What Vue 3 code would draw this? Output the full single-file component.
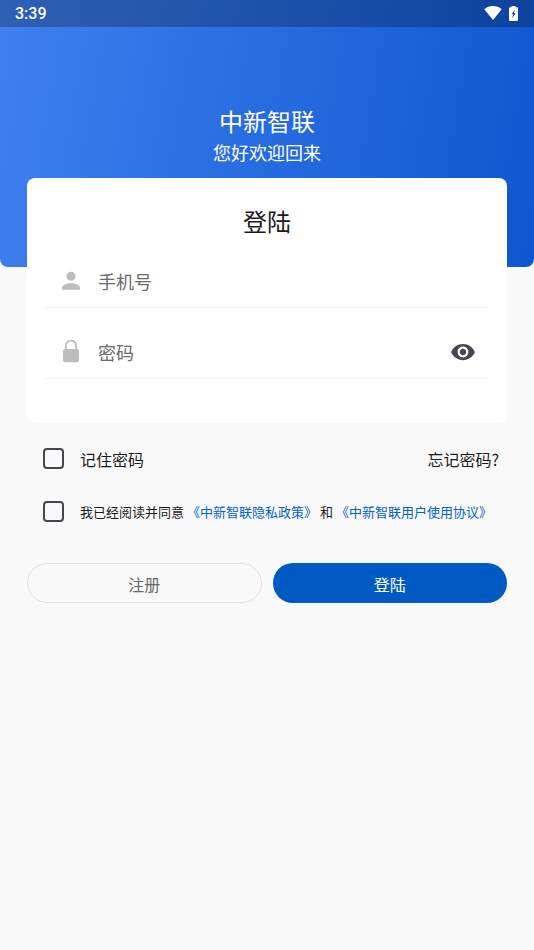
<script setup>
import { ref } from 'vue'

const phone = ref('')
const password = ref('')
const showPassword = ref(false)
const remember = ref(false)
const agreed = ref(false)
</script>

<template>
  <div class="page">
    <header class="hero">
      <div class="status">
        <span class="clock">3:39</span>
        <span class="status-icons">
          <svg width="18" height="14" viewBox="0 0 18 14" aria-hidden="true">
            <path d="M0.3 3.2C2.7 1.1 5.7 0 9 0s6.300 1.100 8.700 3.200L9 14z" fill="#fff" />
          </svg>
          <svg width="9" height="15" viewBox="0 0 9 15" aria-hidden="true">
            <path d="M2.500 0h4v1.300H8a1 1 0 0 1 1 1V14a1 1 0 0 1-1 1H1a1 1 0 0 1-1-1V2.300a1 1 0 0 1 1-1h1.500z" fill="#fff" />
            <path d="M5.800 3.800L2.500 8.200h1.800L3 12.500 6.700 7.300H4.900z" fill="#0d429c" />
          </svg>
        </span>
      </div>
      <h1 class="brand">中新智联</h1>
      <p class="welcome">您好欢迎回来</p>
    </header>

    <form class="form" @submit.prevent>
      <section class="card">
        <h2 class="card-title">登陆</h2>
        <div class="field">
          <svg class="field-icon" width="24" height="24" viewBox="0 0 24 24" aria-hidden="true">
            <circle cx="12" cy="7.200" r="4.500" fill="#bdbdbd" />
            <path d="M3 20.800v-2.200c0-3 5.800-4.400 9-4.400s9 1.400 9 4.400v2.200z" fill="#bdbdbd" />
          </svg>
          <input v-model="phone" class="text" type="tel" placeholder="手机号" aria-label="手机号" />
        </div>
        <div class="field">
          <svg class="field-icon" width="24" height="24" viewBox="0 0 24 24" aria-hidden="true">
            <path d="M6.800 10V5.600a5.200 5 0 0 1 10.400 0V10" fill="none" stroke="#bdbdbd" stroke-width="1.800" />
            <rect x="4" y="9" width="16" height="13.300" rx="2" fill="#bdbdbd" />
          </svg>
          <input
            v-model="password"
            class="text"
            :type="showPassword ? 'text' : 'password'"
            placeholder="密码"
            aria-label="密码"
          />
          <button class="eye" type="button" aria-label="显示密码" @click="showPassword = !showPassword">
            <svg width="26" height="26" viewBox="0 0 24 24" aria-hidden="true">
              <path
                d="M12 4.500C7 4.500 2.730 7.610 1 12c1.730 4.390 6 7.500 11 7.500s9.270-3.110 11-7.500c-1.730-4.390-6-7.500-11-7.500zM12 17c-2.760 0-5-2.240-5-5s2.240-5 5-5 5 2.240 5 5-2.240 5-5 5zm0-8c-1.660 0-3 1.340-3 3s1.340 3 3 3 3-1.340 3-3-1.340-3-3-3z"
                fill="#49454f"
              />
            </svg>
          </button>
        </div>
      </section>

      <div class="option">
        <input id="remember" v-model="remember" class="check" type="checkbox" />
        <label class="option-label" for="remember">记住密码</label>
        <a class="forgot" href="#">忘记密码?</a>
      </div>
      <div class="option">
        <input id="agree" v-model="agreed" class="check" type="checkbox" />
        <div class="terms">
          <label for="agree">我已经阅读并同意</label>
          <a href="#">《中新智联隐私政策》</a>
          <span>和</span>
          <a href="#">《中新智联用户使用协议》</a>
        </div>
      </div>

      <div class="actions">
        <button class="btn outline" type="button">注册</button>
        <button class="btn solid" type="submit">登陆</button>
      </div>
    </form>
  </div>
</template>

<style>
body {
  margin: 0;
  background: #f9f9f9;
}
</style>

<style scoped>
.page {
  min-height: 100vh;
  background: #f9f9f9;
  color: #1b1b1f;
  font-family: "Noto Sans CJK SC", sans-serif;
  font-weight: 400;
}
.hero {
  box-sizing: border-box;
  padding-bottom: 101px;
  border-radius: 0 0 8px 8px;
  background: linear-gradient(100deg, #4080f0, #0e56d0);
  color: #fff;
  text-align: center;
}
.status {
  display: flex;
  align-items: center;
  justify-content: space-between;
  height: 27px;
  padding: 0 16px 0 15px;
  background: rgba(0, 0, 0, 0.25);
}
.clock {
  font-family: Roboto, sans-serif;
  font-size: 16px;
  font-weight: 500;
  line-height: 27px;
}
.status-icons {
  display: flex;
  align-items: center;
  gap: 7px;
  padding-bottom: 1px;
}
.status-icons svg {
  display: block;
}
.brand {
  margin: 0;
  padding-top: 76px;
  font-size: 24px;
  font-weight: 400;
  line-height: 36px;
}
.welcome {
  margin: 0;
  font-size: 18px;
  line-height: 27px;
}
.form {
  margin-top: -89px;
  padding: 0 27px;
}
.card {
  padding: 25px 18px 44px;
  border-radius: 8px;
  background: #fff;
}
.card-title {
  margin: 0;
  font-size: 24px;
  font-weight: 400;
  line-height: 36px;
  text-align: center;
}
.field {
  display: flex;
  align-items: center;
  box-sizing: border-box;
  height: 53px;
  margin-top: 16px;
  padding: 0 13px 0 14px;
  border-bottom: 1px solid #f4f4f4;
}
.field + .field {
  margin-top: 18px;
}
.field-icon {
  flex: none;
  margin-right: 15px;
}
.text {
  flex: 1;
  min-width: 0;
  height: 36px;
  padding: 0;
  border: 0;
  outline: 0;
  background: transparent;
  color: #1b1b1f;
  font: inherit;
  font-size: 18px;
}
.text::placeholder {
  color: #6b6b6b;
  opacity: 1;
}
.eye {
  padding: 0;
  border: 0;
  background: none;
  cursor: pointer;
}
.eye svg {
  display: block;
}
.option {
  display: flex;
  align-items: center;
  height: 53px;
  padding-left: 16px;
}
.card + .option {
  padding-top: 9px;
}
.check {
  flex: none;
  box-sizing: border-box;
  width: 21px;
  height: 21px;
  margin: 0 16px 0 0;
  appearance: none;
  border: 2px solid #49454f;
  border-radius: 4px;
}
.check:checked {
  background: #005ac4;
  border-color: #005ac4;
}
.option-label,
.forgot {
  font-size: 16px;
  line-height: 24px;
}
.forgot {
  margin-left: auto;
  padding-right: 8px;
  color: #1b1b1f;
  text-decoration: none;
}
.terms {
  display: flex;
  gap: 3px;
  font-size: 13px;
  line-height: 20px;
  white-space: nowrap;
}
.terms a {
  color: #0061cf;
  text-decoration: none;
}
.actions {
  display: grid;
  grid-template-columns: 1fr 1fr;
  gap: 11px;
  padding-top: 25px;
}
.btn {
  height: 40px;
  padding: 1px 0 0;
  border: 0;
  border-radius: 20px;
  font: inherit;
  font-size: 16px;
  cursor: pointer;
}
.outline {
  border: 1px solid #e0e0e0;
  background: transparent;
  color: #666;
}
.solid {
  background: #005ac4;
  color: #fff;
}
</style>
